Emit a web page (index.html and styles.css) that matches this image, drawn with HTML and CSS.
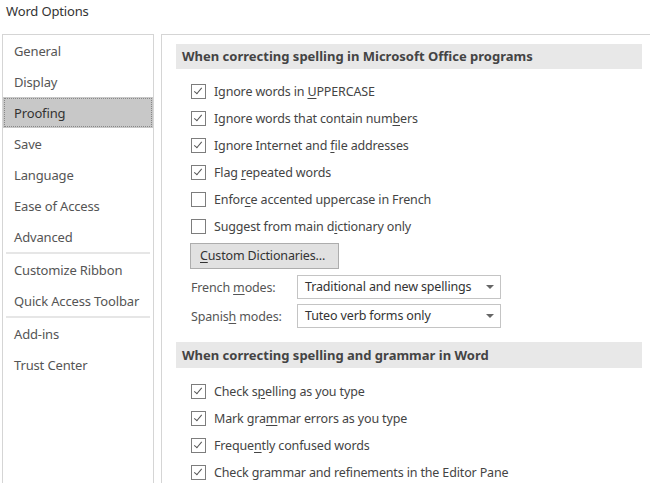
FILE: index.html
```html
<!doctype html>
<html>
  <head>
    <title>Word Options</title>
    <meta charset='utf-8'>
    <link rel="stylesheet" href="styles.css">
  </head>
  <body>
    <div class='wo-title'>Word Options</div>
    <div class='wo-dialog'>
      <nav class='nv-list'>
        <div class='nv-item'>General</div>
        <div class='nv-item'>Display</div>
        <div class='nv-item nv-selected'>Proofing</div>
        <div class='nv-item'>Save</div>
        <div class='nv-item'>Language</div>
        <div class='nv-item'>Ease of Access</div>
        <div class='nv-item'>Advanced</div>
        <div class='nv-sep'></div>
        <div class='nv-item'>Customize Ribbon</div>
        <div class='nv-item'>Quick Access Toolbar</div>
        <div class='nv-sep'></div>
        <div class='nv-item'>Add-ins</div>
        <div class='nv-item'>Trust Center</div>
      </nav>
      <main class='pf-content'>
        <h2 class='pf-header'>When correcting spelling in Microsoft Office programs</h2>
        <div class='pf-group'>
          <label class='pf-check'><span class='cb cb-on'></span><span>Ignore words in <u>U</u>PPERCASE</span></label>
          <label class='pf-check'><span class='cb cb-on'></span><span>Ignore words that contain num<u>b</u>ers</span></label>
          <label class='pf-check'><span class='cb cb-on'></span><span>Ignore Internet and <u>f</u>ile addresses</span></label>
          <label class='pf-check'><span class='cb cb-on'></span><span>Flag <u>r</u>epeated words</span></label>
          <label class='pf-check'><span class='cb'></span><span>Enfor<u>c</u>e accented uppercase in French</span></label>
          <label class='pf-check'><span class='cb'></span><span>Suggest from main d<u>i</u>ctionary only</span></label>
        </div>
        <div class='pf-button'><u>C</u>ustom Dictionaries...</div>
        <div class='pf-modes'>
          <div class='pf-mode'>
            <span class='pf-mode-label'>French <u>m</u>odes:</span>
            <span class='pf-select'>Traditional and new spellings<span class='pf-arrow'></span></span>
          </div>
          <div class='pf-mode'>
            <span class='pf-mode-label'>Spanis<u>h</u> modes:</span>
            <span class='pf-select'>Tuteo verb forms only<span class='pf-arrow'></span></span>
          </div>
        </div>
        <h2 class='pf-header pf-header-2'>When correcting spelling and grammar in Word</h2>
        <div class='pf-group pf-group-2'>
          <label class='pf-check'><span class='cb cb-on'></span><span>Check s<u>p</u>elling as you type</span></label>
          <label class='pf-check'><span class='cb cb-on'></span><span>Mark gra<u>m</u>mar errors as you type</span></label>
          <label class='pf-check'><span class='cb cb-on'></span><span>Freque<u>n</u>tly confused words</span></label>
          <label class='pf-check'><span class='cb cb-on'></span><span>Check grammar and refinements in the Editor Pane</span></label>
        </div>
      </main>
    </div>
  </body>
</html>
```

FILE: styles.css
```css
body {
  margin: 0;
  background-color: #fff;
  color: #444;
  font-family: 'Noto Sans', 'Open Sans', sans-serif;
  font-size: 12.5px;
  letter-spacing: -0.15px;
  overflow: hidden;
}
u {
  text-decoration-thickness: 1px;
  text-underline-offset: 2px;
}
.wo-title {
  height: 34px;
  padding-left: 6px;
  line-height: 22px;
  font-size: 13px;
  color: #333;
}
.wo-dialog {
  display: flex;
  gap: 7px;
  padding-left: 2px;
  height: 449px;
}
.nv-list {
  width: 150px;
  border: 1px solid #d5d5d5;
  border-bottom: none;
}
.nv-item {
  height: 31px;
  line-height: 32px;
  padding-left: 11px;
  font-size: 13px;
  color: #555;
}
.nv-selected {
  background-color: #c8c8c8;
  outline: 1px dotted #888;
  outline-offset: -2px;
  color: #333;
}
.nv-sep {
  height: 2px;
  margin: 0 3px;
  background-color: #e6e6e6;
}
.pf-content {
  flex: 1;
  border-left: 1px solid #d5d5d5;
  border-top: 1px solid #d5d5d5;
  padding: 9px 8px 0 14px;
}
.pf-header {
  margin: 0;
  height: 25px;
  line-height: 25px;
  padding-left: 6px;
  background-color: #e8e8e8;
  font-size: 13px;
  letter-spacing: 0;
  font-weight: bold;
  color: #444;
}
.pf-header-2 {
  margin-top: 14px;
  height: 26px;
  line-height: 26px;
}
.pf-group {
  display: flex;
  flex-direction: column;
  padding: 9px 0 0 15px;
}
.pf-group-2 {
  padding-top: 10px;
}
.pf-check {
  display: flex;
  align-items: center;
  gap: 8px;
  height: 27px;
}
.cb {
  width: 13px;
  height: 13px;
  border: 1px solid #7d7d7d;
  background-color: #fff;
  position: relative;
}
.cb-on::after {
  content: '';
  position: absolute;
  left: 4px;
  top: 1px;
  width: 3px;
  height: 7px;
  border: solid #555;
  border-width: 0 1.5px 1.5px 0;
  transform: rotate(40deg);
}
.pf-button {
  display: inline-block;
  margin: 3px 0 0 14px;
  width: 138px;
  height: 24px;
  line-height: 24px;
  padding-left: 9px;
  box-sizing: content-box;
  background-color: #e1e1e1;
  border: 1px solid #adadad;
  color: #333;
}
.pf-modes {
  display: flex;
  flex-direction: column;
  gap: 5px;
  padding: 6px 0 0 15px;
}
.pf-mode {
  display: flex;
  align-items: center;
}
.pf-mode-label {
  width: 106px;
  color: #555;
}
.pf-select {
  position: relative;
  width: 195px;
  height: 22px;
  line-height: 22px;
  padding-left: 7px;
  border: 1px solid #c4c4c4;
  color: #333;
}
.pf-arrow {
  position: absolute;
  right: 6px;
  top: 9px;
  border-left: 4px solid transparent;
  border-right: 4px solid transparent;
  border-top: 4px solid #666;
}
```
